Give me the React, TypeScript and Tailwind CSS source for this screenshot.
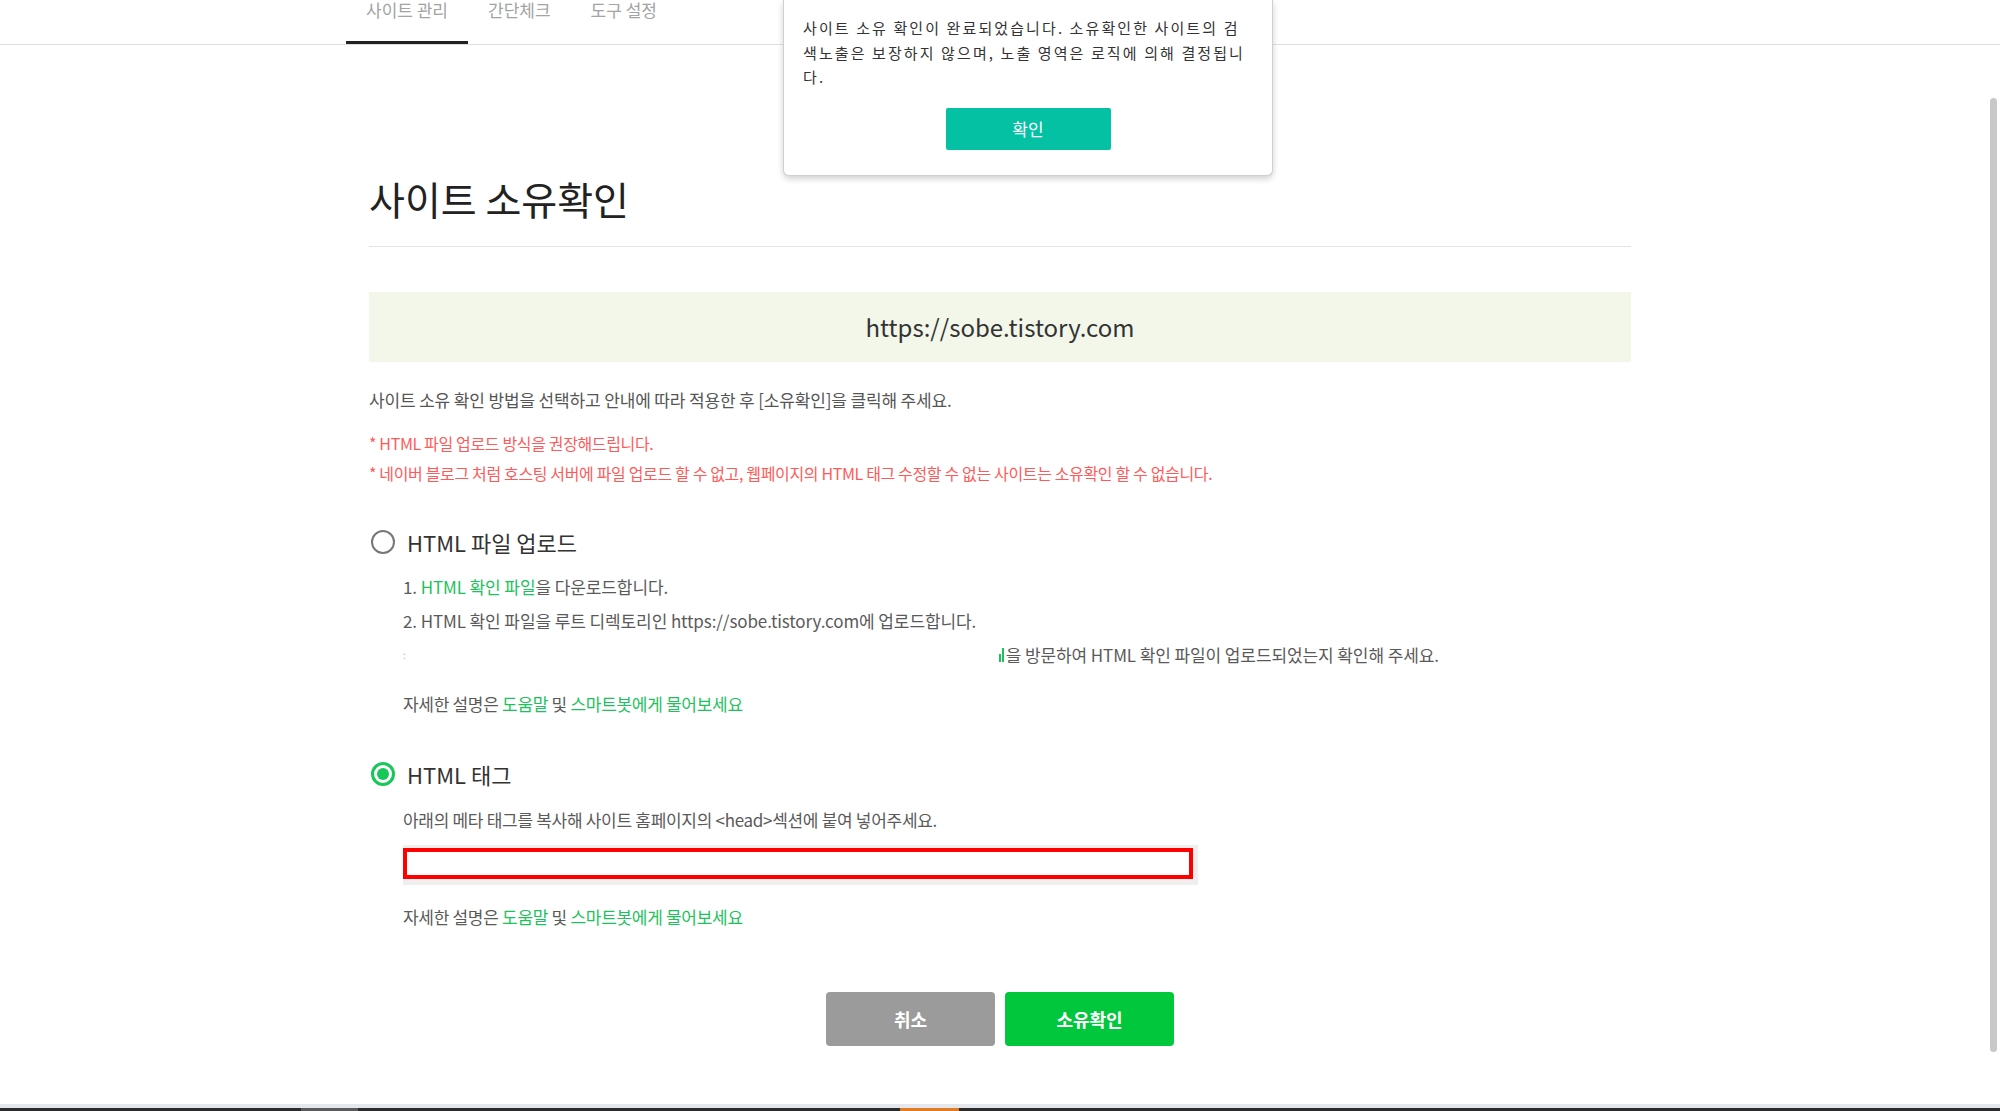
import React from "react";

const tabs = ["사이트 관리", "간단체크", "도구 설정"];

function HelpLine() {
  return (
    <p className="leading-[34px] text-[17px] tracking-[-0.3px] text-[#5a5a5a]">
      자세한 설명은 <span className="text-[#1dc25d]">도움말</span> 및{" "}
      <span className="text-[#1dc25d]">스마트봇에게 물어보세요</span>
    </p>
  );
}

export default function App() {
  return (
    <div className="relative flex h-[1111px] w-full flex-col overflow-hidden bg-white font-['Noto_Sans_CJK_KR','Noto_Sans',sans-serif]">
      {/* tab bar */}
      <div className="flex h-[45px] border-b border-[#dddddd] pl-[346px]">
        {tabs.map((t, i) => (
          <div
            key={t}
            className={
              i === 0
                ? "h-[44px] border-b-[3px] border-[#222222] px-[20px] text-[17px] leading-[20px] text-[#a3a3a3]"
                : "h-[44px] px-[20px] text-[17px] leading-[20px] text-[#a3a3a3]"
            }
          >
            {t}
          </div>
        ))}
      </div>

      <main className="mx-auto w-[1262px] flex-1">
        <h1 className="mt-[131px] text-[39px] leading-[44px] font-normal text-[#222222]">사이트 소유확인</h1>
        <div className="mt-[26px] h-px bg-[#e4e4e4]" />

        <div className="mt-[45px] flex h-[70px] items-center justify-center bg-[#f2f7ea] text-[24px] text-[#333333]">
          https://sobe.tistory.com
        </div>

        <p className="mt-[26px] text-[17px] leading-[24px] tracking-[-0.15px] text-[#555555]">
          사이트 소유 확인 방법을 선택하고 안내에 따라 적용한 후 [소유확인]을 클릭해 주세요.
        </p>

        <div className="mt-[16px] text-[16px] leading-[30px] tracking-[-0.35px] text-[#ff5a5a]">
          <p>* HTML 파일 업로드 방식을 권장해드립니다.</p>
          <p>* 네이버 블로그 처럼 호스팅 서버에 파일 업로드 할 수 없고, 웹페이지의 HTML 태그 수정할 수 없는 사이트는 소유확인 할 수 없습니다.</p>
        </div>

        {/* option 1 */}
        <div className="mt-[39px] flex h-[30px] items-center gap-[12px] pl-[2px]">
          <span className="h-[24px] w-[24px] rounded-full border-2 border-[#777777]" />
          <span className="text-[22px] text-[#333333]">HTML 파일 업로드</span>
        </div>
        <div className="pl-[34px]">
          <div className="mt-[13px] text-[17px] leading-[34px] tracking-[-0.1px] text-[#5a5a5a]">
            <p>
              1. <span className="text-[#1dc25d]">HTML 확인 파일</span>을 다운로드합니다.
            </p>
            <p>2. HTML 확인 파일을 루트 디렉토리인 https://sobe.tistory.com에 업로드합니다.</p>
            <p className="flex items-center">
              <span className="text-[10px] text-[#bbbbbb]">:</span>
              <span className="ml-[593px] flex items-end gap-[1px] pb-[1px]">
                <span className="h-[8px] w-[2px] bg-[#1dc25d]" />
                <span className="h-[14px] w-[2px] bg-[#1dc25d]" />
              </span>
              <span className="ml-[2px]">을 방문하여 HTML 확인 파일이 업로드되었는지 확인해 주세요.</span>
            </p>
          </div>
          <div className="mt-[15px]">
            <HelpLine />
          </div>
        </div>

        {/* option 2 */}
        <div className="mt-[38px] flex h-[30px] items-center gap-[12px] pl-[2px]">
          <span className="flex h-[24px] w-[24px] items-center justify-center rounded-full border-[3px] border-[#19c65a]">
            <span className="h-[12px] w-[12px] rounded-full bg-[#19c65a]" />
          </span>
          <span className="text-[22px] text-[#333333]">HTML 태그</span>
        </div>
        <div className="pl-[34px]">
          <p className="mt-[14px] text-[17px] leading-[34px] tracking-[-0.3px] text-[#5a5a5a]">
            아래의 메타 태그를 복사해 사이트 홈페이지의 &lt;head&gt;섹션에 붙여 넣어주세요.
          </p>
          <div className="mt-[8px] h-[40px] w-[795px] bg-[#efefef] pt-[3px]">
            <div className="h-[31px] w-[790px] border-[4px] border-[#ff0000] bg-white" />
          </div>
          <div className="mt-[15px]">
            <HelpLine />
          </div>
        </div>

        <div className="mt-[58px] flex justify-center gap-[10px]">
          <button className="h-[54px] w-[169px] rounded-[4px] bg-[#9b9b9b] text-[18px] font-bold text-white">취소</button>
          <button className="h-[54px] w-[169px] rounded-[4px] bg-[#00c73c] text-[18px] font-bold text-white">소유확인</button>
        </div>
      </main>

      {/* taskbar edge */}
      <div className="h-[4px] bg-[#e4e8ee]" />
      <div className="flex h-[3px] bg-[#2b2b2b]">
        <span className="ml-[301px] w-[57px] bg-[#5a5a5a]" />
        <span className="ml-[542px] w-[59px] bg-[#e07b26]" />
      </div>

      {/* scrollbar */}
      <div className="absolute right-[3px] top-[98px] h-[954px] w-[7px] rounded-full bg-[#c8c8c8]" />

      {/* confirm dialog */}
      <div className="absolute left-[783px] top-0 w-[490px] rounded-b-[6px] border border-t-0 border-[#d0d0d0] bg-white px-[19px] pt-[16px] pb-[25px] shadow-[0_3px_6px_rgba(0,0,0,0.18)]">
        <p className="whitespace-nowrap text-[15px] leading-[24.5px] tracking-[2.1px] text-[#333333]">
          사이트 소유 확인이 완료되었습니다. 소유확인한 사이트의 검<br />
          색노출은 보장하지 않으며, 노출 영역은 로직에 의해 결정됩니<br />
          다.
        </p>
        <div className="mt-[18px] flex justify-center">
          <button className="h-[42px] w-[165px] rounded-[2px] bg-[#03c1a2] text-[17px] text-white">확인</button>
        </div>
      </div>
    </div>
  );
}
